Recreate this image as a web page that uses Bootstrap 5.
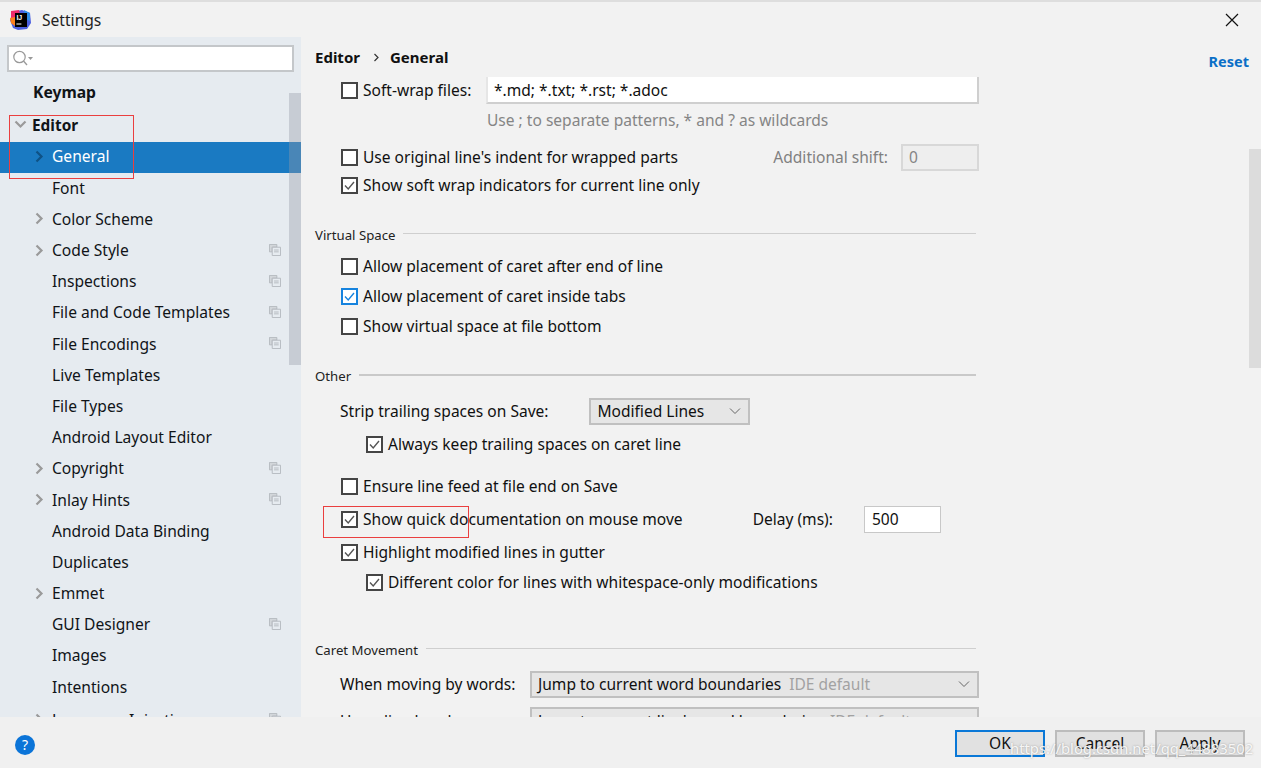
<!DOCTYPE html>
<html lang="en">
<head>
<meta charset="utf-8">
<title>Settings</title>
<link rel="stylesheet" href="https://cdn.jsdelivr.net/npm/bootstrap@5.3.0/dist/css/bootstrap.min.css">
<style>
html,body{height:768px;overflow:hidden}
body{background:#f2f2f2;color:#101010;font-family:"Noto Sans",sans-serif;font-size:15.55px;line-height:20px}
.shell{width:1261px;height:768px;position:relative;overflow:hidden}
.tbar{height:37px;border-top:2px solid #dedede;padding-left:10px}
.tbar-title{margin-left:11px;font-size:15.6px;color:#222}
.tbar-x{margin-left:auto;margin-right:22px;width:14px;height:14px;display:block}
.midpart{height:680px;overflow:hidden}
.side{width:301px;flex:none;background:#e6ebf0;position:relative;overflow:hidden}
.srch{margin:8px 7px 0;height:27px;width:287px;background:#fff;border:2px solid #c4c7ca;padding-left:4px}
.tree{margin-top:4px}
.node{height:31.2px;padding-left:52px;padding-bottom:2.2px;position:relative;color:#101418;font-size:15.6px}
.node.keymap{padding-left:33px;padding-bottom:0;font-weight:700;margin-bottom:3.6px;font-size:15.7px}
.node.edit{padding-left:32px;padding-bottom:1px;font-weight:700;font-size:15.4px}
.node.sel{background:#1a7ac2;color:#fff}
.node.lastn{margin-top:2px}
.chev{position:absolute;left:35px;top:8px;width:9px;height:13px}
.chevd{position:absolute;left:14px;top:9px;width:13px;height:9px}
.cpy{position:absolute;left:269px;top:8px;width:12px;height:12px}
.sb{position:absolute;top:56px;left:289px;width:12px;height:272px;background:rgba(150,155,165,.38)}
.sb2{position:absolute;top:112px;right:0;width:12px;height:219px;background:#dcdcdc}
.panel{flex:1 1 auto;position:relative;overflow:hidden;padding-left:14px}
.crumbs{height:24px;margin-top:8px;font-weight:700;font-size:15px}
.crumb-sep{width:7px;height:9px;margin:0 10px 0 13px;display:block}
.reset{position:absolute;right:12px;top:14px;color:#0b6fc7;font-weight:700;font-size:14.5px;text-decoration:none}
.rw{height:28px;width:664px}
.ind1{padding-left:26px}
.ind2{padding-left:51px}
.s0{margin-top:0}.s2{margin-top:2px}.s3{margin-top:3px}.s5{margin-top:5px}.s6{margin-top:6px}.s7{margin-top:7px}.s8{margin-top:8px}.s9{margin-top:9px}.s14{margin-top:14px}.s22{margin-top:22px}.s40{margin-top:40px}
.first{margin-top:7px}
.form-check-input.ck{width:17px;height:17px;margin:0 5px 0 0;flex:none;border:2px solid #454545;border-radius:0;background-color:#fff}
.form-check-input.ck:checked{background-color:#fff;border-color:#454545;background-size:13px 13px;background-position:center;background-repeat:no-repeat;background-image:url("data:image/svg+xml,%3Csvg xmlns='http://www.w3.org/2000/svg' viewBox='0 0 13 13'%3E%3Cpath d='M2 6.5l3.2 3.4L11 3' fill='none' stroke='%23555' stroke-width='1.4'/%3E%3C/svg%3E")}
.form-check-input.ck.foc:checked{border-color:#1683de;background-image:url("data:image/svg+xml,%3Csvg xmlns='http://www.w3.org/2000/svg' viewBox='0 0 13 13'%3E%3Cpath d='M2 6.5l3.2 3.4L11 3' fill='none' stroke='%231683de' stroke-width='1.4'/%3E%3C/svg%3E")}
.form-check-input.ck:focus{box-shadow:none}
.ck-label{margin:0;color:#101010}
.tfield{width:493px;height:27px;background:#fff;border:0;border-bottom:2px solid #cfcfcf;border-right:2px solid #cfcfcf;border-left:2px solid #e6e6e6;padding:0 6px;margin-left:auto;color:#101010;line-height:27px;border-radius:0}
.hint{color:#858585;padding-left:172px}
.shiftlbl{color:#808080;margin-left:auto;margin-right:13px}
.shiftbox{width:78px;height:27px;background:#eeeeee;border:2px solid #d8d8d8;color:#858585;padding-left:6px;line-height:23px}
.sect{font-size:13.2px;color:#222;width:661px}
.sect-line{flex:1 1 auto;height:1px;background:#cfcfcf;margin-left:8px;margin-top:-3px}
.sect-line.thick{height:2px;background:#c9c9c9}
.combo{height:27px;background:#e6e6e6;border:2px solid #c0c0c0;padding-left:6px;position:relative}
.combo-a{width:161px;margin-left:41px}
.combo-b{width:449px;margin-left:13px}
.combo-caret{position:absolute;right:7px;top:7px;width:12px;height:8px}
.muted-tag{color:#a2a2a2;margin-left:8px}
.striplbl{margin-left:-1px}
.delay{margin-left:70px}
.delay-in{width:77px;height:27px;background:#fff;border:1px solid #c8c8c8;margin-left:31px;padding-left:7px;line-height:25px}
.lbl-b{margin-left:-1px;width:177px;flex:none}
.lowtxt{padding-top:2px}
.foot{height:51px;background:#f0f0f0;position:relative;padding:13px 16px 0 15px}
.helpb{width:20px;height:20px;border-radius:50%;background:#0b74d8;color:#fff;font-size:14px;line-height:20px;text-align:center;margin-top:5px}
.btn.fbtn{width:90px;height:27px;padding:0 0 2px;border-radius:0;background:#e1e1e1;border:2px solid #bcbcbc;color:#111;font-size:15.55px;line-height:20px;margin-left:10px}
.btn.fbtn.okb{border-color:#0a78d7}
.redmark{position:absolute;border:1px solid #ea3f3f;pointer-events:none}
.rm1{left:9px;top:115px;width:125px;height:64px}
.rm2{left:323px;top:506px;width:146px;height:32px}
.wmark{position:absolute;left:1010px;top:738px;font-size:14.8px;color:rgba(255,255,255,.9);text-shadow:0 0 2px rgba(120,120,120,.7);white-space:nowrap}
</style>
</head>
<body>
<div class="shell">
  <div class="tbar d-flex align-items-center">
    <svg width="21" height="22" viewBox="0 0 21 22" aria-hidden="true">
      <path d="M3 3 12 1 20 4 21 14 17 20 8 21 3 19 0 11Z" fill="#4b5fe0"/>
      <path d="M1 2 9 1 11 10 4 16 1 13Z" fill="#ee2b6c"/>
      <path d="M0 9 5 8 5 17 1 14Z" fill="#fc801d"/>
      <path d="M14 1 20 4 20 12 15 10Z" fill="#2f8fe8"/>
      <rect x="5" y="4" width="12" height="14" fill="#000"/>
      <text x="6.4" y="11" font-size="7" font-weight="700" fill="#fff" font-family="Liberation Sans,sans-serif">IJ</text>
      <rect x="6.4" y="14.5" width="5" height="1" fill="#fff"/>
    </svg>
    <span class="tbar-title">Settings</span>
    <svg class="tbar-x" viewBox="0 0 14 14" aria-label="Close"><path d="M1 1 13 13M13 1 1 13" stroke="#111" stroke-width="1.2" fill="none"/></svg>
  </div>
  <div class="midpart d-flex">
    <aside class="side">
      <div class="srch d-flex align-items-center">
        <svg width="20" height="17" viewBox="0 0 20 17" aria-hidden="true"><circle cx="6.5" cy="7" r="5.7" fill="none" stroke="#999" stroke-width="1.2"/><path d="M10.5 11 14 15" stroke="#999" stroke-width="1.4"/><path d="M15 7h5l-2.5 3z" fill="#999"/></svg>
      </div>
      <div class="tree">
        <div class="node keymap d-flex align-items-center">Keymap</div>
        <div class="node edit d-flex align-items-center"><svg class="chevd" viewBox="0 0 13 9"><path d="M1.5 1.5 6.5 6.5 11.5 1.5" fill="none" stroke="#9a9a9a" stroke-width="2.2"/></svg>Editor</div>
        <div class="node sel d-flex align-items-center"><svg class="chev" viewBox="0 0 9 13"><path d="M1.5 1.5 6.5 6.5 1.5 11.5" fill="none" stroke="#0f5285" stroke-width="2.2"/></svg>General</div>
        <div class="node d-flex align-items-center">Font</div>
        <div class="node d-flex align-items-center"><svg class="chev" viewBox="0 0 9 13"><path d="M1.5 1.5 6.5 6.5 1.5 11.5" fill="none" stroke="#9a9a9a" stroke-width="2.2"/></svg>Color Scheme</div>
        <div class="node d-flex align-items-center"><svg class="chev" viewBox="0 0 9 13"><path d="M1.5 1.5 6.5 6.5 1.5 11.5" fill="none" stroke="#9a9a9a" stroke-width="2.2"/></svg>Code Style<svg class="cpy" viewBox="0 0 13 13"><path d="M.5.5h8v3h-5v5h-3z" fill="#d2d6da" stroke="#b4b9be"/><path d="M3.5 3.5h9v9h-9z" fill="#e6ebf0" stroke="#b4b9be"/><path d="M5.5 6.5h5M5.5 8.5h5" stroke="#b4b9be"/></svg></div>
        <div class="node d-flex align-items-center">Inspections<svg class="cpy" viewBox="0 0 13 13"><path d="M.5.5h8v3h-5v5h-3z" fill="#d2d6da" stroke="#b4b9be"/><path d="M3.5 3.5h9v9h-9z" fill="#e6ebf0" stroke="#b4b9be"/><path d="M5.5 6.5h5M5.5 8.5h5" stroke="#b4b9be"/></svg></div>
        <div class="node d-flex align-items-center">File and Code Templates<svg class="cpy" viewBox="0 0 13 13"><path d="M.5.5h8v3h-5v5h-3z" fill="#d2d6da" stroke="#b4b9be"/><path d="M3.5 3.5h9v9h-9z" fill="#e6ebf0" stroke="#b4b9be"/><path d="M5.5 6.5h5M5.5 8.5h5" stroke="#b4b9be"/></svg></div>
        <div class="node d-flex align-items-center">File Encodings<svg class="cpy" viewBox="0 0 13 13"><path d="M.5.5h8v3h-5v5h-3z" fill="#d2d6da" stroke="#b4b9be"/><path d="M3.5 3.5h9v9h-9z" fill="#e6ebf0" stroke="#b4b9be"/><path d="M5.5 6.5h5M5.5 8.5h5" stroke="#b4b9be"/></svg></div>
        <div class="node d-flex align-items-center">Live Templates</div>
        <div class="node d-flex align-items-center">File Types</div>
        <div class="node d-flex align-items-center">Android Layout Editor</div>
        <div class="node d-flex align-items-center"><svg class="chev" viewBox="0 0 9 13"><path d="M1.5 1.5 6.5 6.5 1.5 11.5" fill="none" stroke="#9a9a9a" stroke-width="2.2"/></svg>Copyright<svg class="cpy" viewBox="0 0 13 13"><path d="M.5.5h8v3h-5v5h-3z" fill="#d2d6da" stroke="#b4b9be"/><path d="M3.5 3.5h9v9h-9z" fill="#e6ebf0" stroke="#b4b9be"/><path d="M5.5 6.5h5M5.5 8.5h5" stroke="#b4b9be"/></svg></div>
        <div class="node d-flex align-items-center"><svg class="chev" viewBox="0 0 9 13"><path d="M1.5 1.5 6.5 6.5 1.5 11.5" fill="none" stroke="#9a9a9a" stroke-width="2.2"/></svg>Inlay Hints<svg class="cpy" viewBox="0 0 13 13"><path d="M.5.5h8v3h-5v5h-3z" fill="#d2d6da" stroke="#b4b9be"/><path d="M3.5 3.5h9v9h-9z" fill="#e6ebf0" stroke="#b4b9be"/><path d="M5.5 6.5h5M5.5 8.5h5" stroke="#b4b9be"/></svg></div>
        <div class="node d-flex align-items-center">Android Data Binding</div>
        <div class="node d-flex align-items-center">Duplicates</div>
        <div class="node d-flex align-items-center"><svg class="chev" viewBox="0 0 9 13"><path d="M1.5 1.5 6.5 6.5 1.5 11.5" fill="none" stroke="#9a9a9a" stroke-width="2.2"/></svg>Emmet</div>
        <div class="node d-flex align-items-center">GUI Designer<svg class="cpy" viewBox="0 0 13 13"><path d="M.5.5h8v3h-5v5h-3z" fill="#d2d6da" stroke="#b4b9be"/><path d="M3.5 3.5h9v9h-9z" fill="#e6ebf0" stroke="#b4b9be"/><path d="M5.5 6.5h5M5.5 8.5h5" stroke="#b4b9be"/></svg></div>
        <div class="node d-flex align-items-center">Images</div>
        <div class="node d-flex align-items-center">Intentions</div>
        <div class="node lastn d-flex align-items-center"><svg class="chev" viewBox="0 0 9 13"><path d="M1.5 1.5 6.5 6.5 1.5 11.5" fill="none" stroke="#9a9a9a" stroke-width="2.2"/></svg>Language Injections<svg class="cpy" viewBox="0 0 13 13"><path d="M.5.5h8v3h-5v5h-3z" fill="#d2d6da" stroke="#b4b9be"/><path d="M3.5 3.5h9v9h-9z" fill="#e6ebf0" stroke="#b4b9be"/><path d="M5.5 6.5h5M5.5 8.5h5" stroke="#b4b9be"/></svg></div>
      </div>
      <div class="sb"></div>
    </aside>
    <main class="panel">
      <div class="crumbs d-flex align-items-center">Editor<svg class="crumb-sep" viewBox="0 0 7 9"><path d="M1.5 1 5 4.5 1.5 8" fill="none" stroke="#333" stroke-width="1.2"/></svg>General</div>
      <a class="reset" href="#">Reset</a>

      <div class="rw d-flex align-items-center ind1 first"><input class="form-check-input ck" type="checkbox" id="c1"><label class="ck-label" for="c1">Soft-wrap files:</label><div class="tfield">*.md; *.txt; *.rst; *.adoc</div></div>
      <div class="rw d-flex align-items-center s2"><span class="hint">Use ; to separate patterns, * and ? as wildcards</span></div>
      <div class="rw d-flex align-items-center ind1 s9"><input class="form-check-input ck" type="checkbox" id="c2"><label class="ck-label" for="c2">Use original line's indent for wrapped parts</label><span class="shiftlbl">Additional shift:</span><div class="shiftbox">0</div></div>
      <div class="rw d-flex align-items-center ind1 s0"><input class="form-check-input ck" type="checkbox" id="c3" checked><label class="ck-label" for="c3">Show soft wrap indicators for current line only</label></div>

      <div class="rw d-flex align-items-center sect s22">Virtual Space<span class="sect-line"></span></div>
      <div class="rw d-flex align-items-center ind1 s3"><input class="form-check-input ck" type="checkbox" id="c4"><label class="ck-label" for="c4">Allow placement of caret after end of line</label></div>
      <div class="rw d-flex align-items-center ind1 s2"><input class="form-check-input ck foc" type="checkbox" id="c5" checked><label class="ck-label" for="c5">Allow placement of caret inside tabs</label></div>
      <div class="rw d-flex align-items-center ind1 s2"><input class="form-check-input ck" type="checkbox" id="c6"><label class="ck-label" for="c6">Show virtual space at file bottom</label></div>

      <div class="rw d-flex align-items-center sect s22">Other<span class="sect-line thick"></span></div>
      <div class="rw d-flex align-items-center ind1 s7"><span class="striplbl">Strip trailing spaces on Save:</span><div class="combo combo-a d-flex align-items-center">Modified Lines<svg class="combo-caret" viewBox="0 0 12 8"><path d="M1 1.5 6 6.5 11 1.5" fill="none" stroke="#666" stroke-width="1"/></svg></div></div>
      <div class="rw d-flex align-items-center ind2 s5"><input class="form-check-input ck" type="checkbox" id="c7" checked><label class="ck-label" for="c7">Always keep trailing spaces on caret line</label></div>
      <div class="rw d-flex align-items-center ind1 s14"><input class="form-check-input ck" type="checkbox" id="c8"><label class="ck-label" for="c8">Ensure line feed at file end on Save</label></div>
      <div class="rw d-flex align-items-center ind1 s5"><input class="form-check-input ck" type="checkbox" id="c9" checked><label class="ck-label" for="c9">Show quick documentation on mouse move</label><span class="delay">Delay (ms):</span><div class="delay-in">500</div></div>
      <div class="rw d-flex align-items-center ind1 s5"><input class="form-check-input ck" type="checkbox" id="c10" checked><label class="ck-label" for="c10">Highlight modified lines in gutter</label></div>
      <div class="rw d-flex align-items-center ind2 s2"><input class="form-check-input ck" type="checkbox" id="c11" checked><label class="ck-label" for="c11">Different color for lines with whitespace-only modifications</label></div>

      <div class="rw d-flex align-items-center sect s40">Caret Movement<span class="sect-line"></span></div>
      <div class="rw d-flex align-items-center ind1 s6"><span class="lbl-b">When moving by words:</span><div class="combo combo-b d-flex align-items-center">Jump to current word boundaries<span class="muted-tag">IDE default</span><svg class="combo-caret" viewBox="0 0 12 8"><path d="M1 1.5 6 6.5 11 1.5" fill="none" stroke="#666" stroke-width="1"/></svg></div></div>
      <div class="rw d-flex align-items-center ind1 s8"><span class="lbl-b lowtxt">Upon line break:</span><div class="combo combo-b lowtxt d-flex align-items-center">Jump to current line's word boundaries<span class="muted-tag">IDE default</span></div></div>
      <div class="sb2"></div>
    </main>
  </div>
  <div class="foot d-flex align-items-start">
    <div class="helpb">?</div>
    <button type="button" class="btn fbtn okb ms-auto">OK</button>
    <button type="button" class="btn fbtn">Cancel</button>
    <button type="button" class="btn fbtn">Apply</button>
  </div>
  <div class="redmark rm1"></div>
  <div class="redmark rm2"></div>
  <div class="wmark">https://blog.csdn.net/qq_44883502</div>
</div>
<script src="https://cdn.jsdelivr.net/npm/bootstrap@5.3.0/dist/js/bootstrap.bundle.min.js"></script>
</body>
</html>
